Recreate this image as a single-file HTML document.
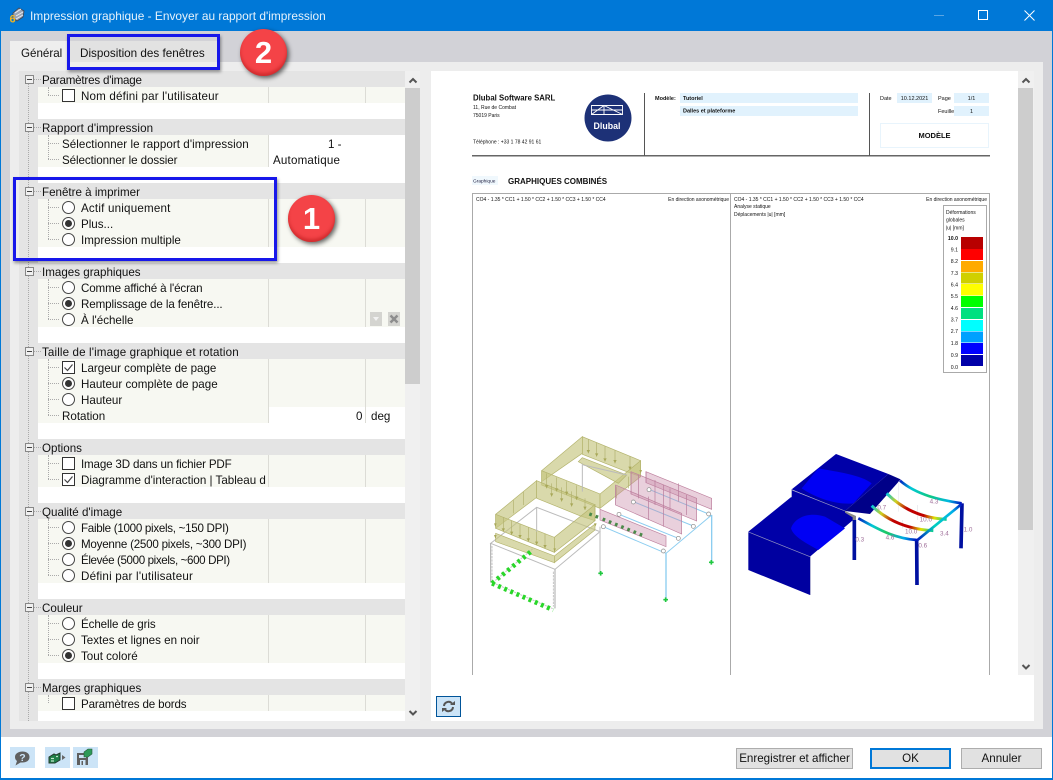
<!DOCTYPE html>
<html lang="fr"><head><meta charset="utf-8"><title>Impression graphique</title>
<style>
*{box-sizing:border-box}
html,body{margin:0;padding:0}
body{width:1053px;height:780px;overflow:hidden;position:relative;background:#fff;font:11.6px/16px "Liberation Sans",sans-serif;color:#111}
div,span.a{position:absolute}
.t{position:absolute;white-space:nowrap;line-height:16px;height:16px;margin-top:1px}
.h{left:19px;width:386px;height:16px;background:#e4e4e4}
.r{left:38px;width:367px;background:#f7f8f2}
.w{left:268px;width:137px;background:#fff}
.s{width:1px;background:#dcdcd6}
.v{width:0;border-left:1px dotted #aaa}
.m{left:25px;width:9px;height:9px;border:1px solid #888;background:#f0f0f0}
.m:after{content:"";position:absolute;left:1px;top:3px;width:5px;height:1px;background:#444}
.c{left:62px;width:13px;height:13px;border:1px solid #333;background:#fff}
.ra{left:62px;width:13px;height:13px;border:1px solid #444;border-radius:50%;background:#fff}
.on:after{content:"";position:absolute;left:2px;top:2px;width:7px;height:7px;border-radius:50%;background:#333}
.b{top:748px;height:21px;background:#e1e1e1;border:1px solid #adadad;text-align:center;line-height:20px;color:#111}
.ib{top:747px;height:21px;width:25px;background:#cce4f7}
.n{border-radius:50%;width:47px;height:47px;background:#f44347;box-shadow:2px 2px 5px rgba(0,0,0,.6),inset 0 -3px 3px rgba(150,0,0,.35);color:#fff;font-weight:bold;font-size:31px;line-height:47px;text-align:center}
.bx{border:3px solid #1717ea;box-shadow:1px 2px 3px rgba(0,0,0,.4)}
</style></head><body>

<!-- window -->
<div style="left:0;top:0;width:1053px;height:31px;background:#0078d7"></div>
<div style="left:1px;top:31px;width:1051px;height:706px;background:#d2d2d7"></div>
<div style="left:0;top:31px;width:1px;height:749px;background:#0078d7"></div>
<div style="left:1052px;top:31px;width:1px;height:749px;background:#0078d7"></div>
<div style="left:0;top:778px;width:1053px;height:2px;background:#0078d7"></div>

<svg style="position:absolute;left:8px;top:7px" width="18" height="18" viewBox="0 0 18 18">
<path d="M5 6 L11 1 L16 4 L15 10 L9 14 L5 11Z" fill="#9aa4b4" stroke="#3d4350" stroke-width=".8"/>
<path d="M7 6 L13 2 M8 9 L15 5 M8 12 L15 8" stroke="#e8ecf2" stroke-width="1"/>
<text x="1.500" y="15.500" font-family="Liberation Sans" font-size="11" font-weight="bold" fill="#f3b51d">6</text>
</svg>
<span class="t" style="left:30px;top:7px;color:#e6f2fb;font-size:11.9px">Impression graphique - Envoyer au rapport d'impression</span>
<div style="left:934px;top:15px;width:10px;height:1px;background:#5aa5e3"></div>
<div style="left:978px;top:10px;width:10px;height:10px;border:1px solid #fff"></div>
<svg style="position:absolute;left:1024px;top:10px" width="11" height="11"><path d="M.5 .5L10.5 10.5M10.5 .5L.5 10.5" stroke="#fff" stroke-width="1"/></svg>

<!-- tabs + panel -->
<div style="left:10px;top:41px;width:57px;height:22px;background:#eee"></div>
<div style="left:68px;top:41px;width:150px;height:21px;background:#e2e2e2"></div>
<div style="left:10px;top:62px;width:1033px;height:667px;background:#ededed"></div>
<span class="t" style="left:21px;top:45px">Général</span>
<span class="t" style="left:80px;top:45px;font-size:11.7px">Disposition des fenêtres</span>

<!-- tree -->
<div style="left:19px;top:71px;width:386px;height:650px;background:#fff"></div>
<div style="left:19px;top:71px;width:19px;height:650px;background:#e4e4e4"></div>

<div class="h" style="top:71px"></div><div class="r" style="top:87px;height:16px"></div>
<div class="h" style="top:119px"></div><div class="r" style="top:135px;height:32px"></div><div class="w" style="top:135px;height:32px"></div>
<div class="h" style="top:183px"></div><div class="r" style="top:199px;height:48px"></div>
<div class="h" style="top:263px"></div><div class="r" style="top:279px;height:48px"></div>
<div class="h" style="top:343px"></div><div class="r" style="top:359px;height:64px"></div><div class="w" style="top:407px;height:16px"></div>
<div class="h" style="top:439px"></div><div class="r" style="top:455px;height:32px"></div>
<div class="h" style="top:503px"></div><div class="r" style="top:519px;height:64px"></div>
<div class="h" style="top:599px"></div><div class="r" style="top:615px;height:48px"></div>
<div class="h" style="top:679px"></div><div class="r" style="top:695px;height:16px"></div>

<!-- separators -->
<div class="s" style="left:268px;top:87px;height:16px"></div><div class="s" style="left:365px;top:87px;height:16px"></div>
<div class="s" style="left:268px;top:135px;height:32px"></div>
<div class="s" style="left:268px;top:199px;height:48px"></div><div class="s" style="left:365px;top:199px;height:48px"></div>
<div class="s" style="left:268px;top:279px;height:48px"></div><div class="s" style="left:365px;top:279px;height:48px"></div>
<div class="s" style="left:268px;top:359px;height:64px"></div><div class="s" style="left:365px;top:359px;height:64px"></div>
<div class="s" style="left:268px;top:455px;height:32px"></div><div class="s" style="left:365px;top:455px;height:32px"></div>
<div class="s" style="left:268px;top:519px;height:64px"></div><div class="s" style="left:365px;top:519px;height:64px"></div>
<div class="s" style="left:268px;top:615px;height:48px"></div><div class="s" style="left:365px;top:615px;height:48px"></div>
<div class="s" style="left:268px;top:695px;height:16px"></div><div class="s" style="left:365px;top:695px;height:16px"></div>

<!-- tree lines -->
<div class="v" style="left:28px;top:84px;height:637px"></div>
<div class="v" style="left:48px;top:87px;height:8px"></div>
<div class="v" style="left:48px;top:135px;height:24px"></div>
<div class="v" style="left:48px;top:199px;height:40px"></div>
<div class="v" style="left:48px;top:279px;height:40px"></div>
<div class="v" style="left:48px;top:359px;height:56px"></div>
<div class="v" style="left:48px;top:455px;height:24px"></div>
<div class="v" style="left:48px;top:519px;height:56px"></div>
<div class="v" style="left:48px;top:615px;height:40px"></div>
<div class="v" style="left:48px;top:695px;height:8px"></div>
<svg style="position:absolute;left:0;top:0" width="70" height="720">
<path stroke="#aaa" stroke-dasharray="1 1" fill="none" d="M34 79.500H41M34 127.500H41M34 191.500H41M34 271.500H41M34 351.500H41M34 447.500H41M34 511.500H41M34 607.500H41M34 687.500H41
M48 95.500H60M48 143.500H60M48 159.500H60M48 207.500H60M48 223.500H60M48 239.500H60M48 287.500H60M48 303.500H60M48 319.500H60M48 367.500H60M48 383.500H60M48 399.500H60M48 415.500H60M48 463.500H60M48 479.500H60M48 527.500H60M48 543.500H60M48 559.500H60M48 575.500H60M48 623.500H60M48 639.500H60M48 655.500H60"/>
</svg>
<div class="m" style="top:75px"></div><div class="m" style="top:123px"></div><div class="m" style="top:187px"></div><div class="m" style="top:267px"></div><div class="m" style="top:347px"></div><div class="m" style="top:443px"></div><div class="m" style="top:507px"></div><div class="m" style="top:603px"></div><div class="m" style="top:683px"></div>

<!-- tree labels -->
<span class="t" style="left:42px;top:72px;letter-spacing:-.2px">Paramètres d'image</span>
<div class="c" style="top:89px"></div><span class="t" style="left:81px;top:88px;letter-spacing:.17px">Nom défini par l'utilisateur</span>
<span class="t" style="left:42px;top:120px;letter-spacing:.1px">Rapport d'impression</span>
<span class="t" style="left:62px;top:136px;letter-spacing:.06px">Sélectionner le rapport d'impression</span>
<span class="t" style="left:328px;top:136px">1 -</span>
<span class="t" style="left:62px;top:152px;letter-spacing:-.08px">Sélectionner le dossier</span>
<span class="t" style="left:273px;top:152px;letter-spacing:.18px">Automatique</span>
<span class="t" style="left:42px;top:184px">Fenêtre à imprimer</span>
<div class="ra" style="top:201px"></div><span class="t" style="left:81px;top:200px;letter-spacing:.2px">Actif uniquement</span>
<div class="ra on" style="top:217px"></div><span class="t" style="left:81px;top:216px">Plus...</span>
<div class="ra" style="top:233px"></div><span class="t" style="left:81px;top:232px">Impression multiple</span>
<span class="t" style="left:42px;top:264px">Images graphiques</span>
<div class="ra" style="top:281px"></div><span class="t" style="left:81px;top:280px;letter-spacing:-.13px">Comme affiché à l'écran</span>
<div class="ra on" style="top:297px"></div><span class="t" style="left:81px;top:296px;letter-spacing:-.1px">Remplissage de la fenêtre...</span>
<div class="ra" style="top:313px"></div><span class="t" style="left:81px;top:312px">À l'échelle</span>
<div style="left:370px;top:312px;width:12px;height:14px;background:#d4d4d0"></div>
<div style="left:388px;top:312px;width:12px;height:14px;background:#d4d4d0"></div>
<svg style="position:absolute;left:370px;top:312px" width="30" height="14"><path d="M3 5H9L6 9Z" fill="#f2f2f2"/><path d="M20.500 3.500L27.500 10.500M27.500 3.500L20.500 10.500" stroke="#8d8d8d" stroke-width="2.500"/></svg>
<span class="t" style="left:42px;top:344px;letter-spacing:.13px">Taille de l'image graphique et rotation</span>
<div class="c" style="top:361px"></div><span class="t" style="left:81px;top:360px">Largeur complète de page</span>
<div class="ra on" style="top:377px"></div><span class="t" style="left:81px;top:376px">Hauteur complète de page</span>
<div class="ra" style="top:393px"></div><span class="t" style="left:81px;top:392px">Hauteur</span>
<span class="t" style="left:62px;top:408px">Rotation</span>
<span class="t" style="left:356px;top:408px">0</span><span class="t" style="left:371px;top:408px">deg</span>
<span class="t" style="left:42px;top:440px">Options</span>
<div class="c" style="top:457px"></div><span class="t" style="left:81px;top:456px;letter-spacing:-.17px">Image 3D dans un fichier PDF</span>
<div class="c" style="top:473px"></div><span class="t" style="left:81px;top:472px;width:186px;overflow:hidden">Diagramme d'interaction | Tableau d</span>
<svg style="position:absolute;left:62px;top:361px" width="13" height="128"><path d="M2.500 6.500L5.500 9.500L10.500 3.500M2.500 118.500L5.500 121.500L10.500 115.500" stroke="#444" stroke-width="1.200" fill="none"/></svg>
<span class="t" style="left:42px;top:504px">Qualité d'image</span>
<div class="ra" style="top:521px"></div><span class="t" style="left:81px;top:520px;letter-spacing:-.29px">Faible (1000 pixels, ~150 DPI)</span>
<div class="ra on" style="top:537px"></div><span class="t" style="left:81px;top:536px;letter-spacing:-.23px">Moyenne (2500 pixels, ~300 DPI)</span>
<div class="ra" style="top:553px"></div><span class="t" style="left:81px;top:552px;letter-spacing:-.38px">Élevée (5000 pixels, ~600 DPI)</span>
<div class="ra" style="top:569px"></div><span class="t" style="left:81px;top:568px;letter-spacing:.2px">Défini par l'utilisateur</span>
<span class="t" style="left:42px;top:600px">Couleur</span>
<div class="ra" style="top:617px"></div><span class="t" style="left:81px;top:616px;letter-spacing:-.1px">Échelle de gris</span>
<div class="ra" style="top:633px"></div><span class="t" style="left:81px;top:632px">Textes et lignes en noir</span>
<div class="ra on" style="top:649px"></div><span class="t" style="left:81px;top:648px">Tout coloré</span>
<span class="t" style="left:42px;top:680px">Marges graphiques</span>
<div class="c" style="top:697px"></div><span class="t" style="left:81px;top:696px;letter-spacing:-.15px">Paramètres de bords</span>

<!-- tree scrollbar -->
<div style="left:405px;top:71px;width:15px;height:650px;background:#f0f0f0"></div>
<div style="left:405px;top:88px;width:15px;height:296px;background:#cdcdcd"></div>
<svg style="position:absolute;left:405px;top:71px" width="16" height="650"><path d="M4.500 11.500L8 8L11.500 11.500" stroke="#555" stroke-width="2" fill="none"/><path d="M4.500 640L8 643.500L11.500 640" stroke="#555" stroke-width="2" fill="none"/></svg>

<!-- preview -->
<div style="left:431px;top:71px;width:603px;height:650px;background:#fff"></div>
<div style="left:1018px;top:71px;width:16px;height:604px;background:#f0f0f0"></div>
<div style="left:1018px;top:88px;width:15px;height:442px;background:#cdcdcd"></div>
<svg style="position:absolute;left:1018px;top:71px" width="16" height="604"><path d="M4.500 11.500L8 8L11.500 11.500" stroke="#555" stroke-width="2" fill="none"/><path d="M4.500 594L8 597.500L11.500 594" stroke="#555" stroke-width="2" fill="none"/></svg>

<svg style="position:absolute;left:0;top:0" width="1053" height="780" font-family="Liberation Sans" fill="#111">
<defs>
<linearGradient id="g1" gradientUnits="userSpaceOnUse" x1="510" y1="120" x2="695" y2="190"><stop offset="0" stop-color="#0018c0"/><stop offset=".2" stop-color="#00c8d8"/><stop offset=".5" stop-color="#10c880"/><stop offset=".8" stop-color="#00b8e0"/><stop offset="1" stop-color="#0010c0"/></linearGradient>
<linearGradient id="g2" gradientUnits="userSpaceOnUse" x1="470" y1="160" x2="650" y2="238"><stop offset="0" stop-color="#00c8e0"/><stop offset=".18" stop-color="#d0d020"/><stop offset=".38" stop-color="#c00000"/><stop offset=".65" stop-color="#c00000"/><stop offset=".82" stop-color="#e0e000"/><stop offset="1" stop-color="#00c8a0"/></linearGradient>
<linearGradient id="g3" gradientUnits="userSpaceOnUse" x1="425" y1="197" x2="610" y2="272"><stop offset="0" stop-color="#00c8e0"/><stop offset=".18" stop-color="#d0d020"/><stop offset=".38" stop-color="#c00000"/><stop offset=".65" stop-color="#c00000"/><stop offset=".82" stop-color="#e0e000"/><stop offset="1" stop-color="#00c8a0"/></linearGradient>
<linearGradient id="g4" gradientUnits="userSpaceOnUse" x1="385" y1="235" x2="560" y2="300"><stop offset="0" stop-color="#0018c0"/><stop offset=".25" stop-color="#00c8d8"/><stop offset=".5" stop-color="#20c860"/><stop offset=".8" stop-color="#00a8e8"/><stop offset="1" stop-color="#0010c0"/></linearGradient>
<linearGradient id="g5" gradientUnits="userSpaceOnUse" x1="560" y1="300" x2="695" y2="192"><stop offset="0" stop-color="#0018c0"/><stop offset=".4" stop-color="#00d0c0"/><stop offset=".8" stop-color="#00b0e8"/><stop offset="1" stop-color="#0010c0"/></linearGradient>
</defs>

<!-- page header -->
<text x="473" y="100.500" font-size="7.800" font-weight="bold">Dlubal Software SARL</text>
<text x="473" y="109" font-size="5">11, Rue de Combat</text>
<text x="473" y="117" font-size="5">75019 Paris</text>
<text x="473" y="143.500" font-size="5">Téléphone : +33 1 78 42 91 61</text>
<circle cx="608" cy="118" r="23.500" fill="#1d3177"/>
<path d="M591.500 114.500V105.500H622.500V114.500ZM591.500 114.500L604 105.500M604 105.500V114.500M604 105.500L622.500 114.500M591.500 110H622.500" stroke="#fff" stroke-width=".9" fill="none"/>
<text x="607" y="129" font-size="8.800" font-weight="bold" fill="#fff" text-anchor="middle">Dlubal</text>
<rect x="472" y="155" width="518" height="1.500" fill="#666"/>
<rect x="644" y="93" width="1" height="63" fill="#555"/>
<rect x="869" y="93" width="1" height="63" fill="#555"/>
<text x="655" y="100" font-size="5.500" font-weight="bold">Modèle:</text>
<rect x="680" y="93" width="178" height="10" fill="#e1f2fd"/>
<rect x="680" y="106" width="178" height="10" fill="#e1f2fd"/>
<text x="683" y="100" font-size="5.500" font-weight="bold">Tutoriel</text>
<text x="683" y="112.500" font-size="5.500" font-weight="bold">Dalles et plateforme</text>
<text x="880" y="100" font-size="5.500">Date</text>
<rect x="897" y="93" width="35" height="10" fill="#e1f2fd"/>
<text x="914.500" y="100" font-size="5.500" text-anchor="middle">10.12.2021</text>
<text x="938" y="100" font-size="5.500">Page</text>
<rect x="954" y="93" width="35" height="10" fill="#e1f2fd"/>
<text x="971.500" y="100" font-size="5.500" text-anchor="middle">1/1</text>
<text x="938" y="113" font-size="5.500">Feuille</text>
<rect x="954" y="106" width="35" height="10" fill="#e1f2fd"/>
<text x="971.500" y="113" font-size="5.500" text-anchor="middle">1</text>
<rect x="880.500" y="123.500" width="108" height="24" fill="#fff" stroke="#e8f4fc"/>
<text x="934.500" y="138" font-size="7.500" font-weight="bold" text-anchor="middle">MODÈLE</text>
<rect x="472" y="176" width="26" height="9" fill="#f0f8fd"/>
<text x="473" y="182.500" font-size="4.800" fill="#224">Graphique</text>
<text x="508" y="184" font-size="8" font-weight="bold">GRAPHIQUES COMBINÉS</text>

<!-- frames -->
<path d="M472.500 675V193.500H989.500V675M730.500 193.500V675" fill="none" stroke="#aaa" stroke-width="1"/>
<text x="476" y="201" font-size="5">CO4 - 1.35 * CC1 + 1.50 * CC2 + 1.50 * CC3 + 1.50 * CC4</text>
<text x="729" y="201" font-size="5" text-anchor="end">En direction axonométrique</text>
<text x="734" y="201" font-size="5">CO4 - 1.35 * CC1 + 1.50 * CC2 + 1.50 * CC3 + 1.50 * CC4</text>
<text x="987" y="201" font-size="5" text-anchor="end">En direction axonométrique</text>
<text x="734" y="208" font-size="5">Analyse statique</text>
<text x="734" y="216" font-size="5">Déplacements |u| [mm]</text>

<!-- legend -->
<rect x="943.500" y="205.500" width="43" height="167" fill="#fff" stroke="#aaa"/>
<text x="946" y="214" font-size="5">Déformations</text>
<text x="946" y="221.500" font-size="5">globales</text>
<text x="946" y="229.500" font-size="5">|u| [mm]</text>
<g>
<rect x="961" y="237" width="22" height="12" fill="#b80000"/>
<rect x="961" y="249" width="22" height="11" fill="#ff0000"/>
<rect x="961" y="261" width="22" height="11" fill="#ffaa00"/>
<rect x="961" y="272.500" width="22" height="11" fill="#d0d000"/>
<rect x="961" y="284" width="22" height="11.500" fill="#ffff00"/>
<rect x="961" y="296" width="22" height="11" fill="#00ff00"/>
<rect x="961" y="308" width="22" height="11" fill="#00e080"/>
<rect x="961" y="320" width="22" height="11" fill="#00ffff"/>
<rect x="961" y="331.500" width="22" height="11" fill="#00a0ff"/>
<rect x="961" y="343" width="22" height="11" fill="#0000ff"/>
<rect x="961" y="355" width="22" height="11" fill="#0000a8"/>
</g>
<g font-size="5.200" text-anchor="end">
<text x="958" y="240" font-weight="bold">10.0</text><text x="958" y="251.500">9.1</text><text x="958" y="263">8.2</text><text x="958" y="275">7.3</text><text x="958" y="286.500">6.4</text><text x="958" y="298">5.5</text><text x="958" y="310">4.6</text><text x="958" y="321.500">3.7</text><text x="958" y="333">2.7</text><text x="958" y="345">1.8</text><text x="958" y="357">0.9</text><text x="958" y="369">0.0</text>
</g>

<!-- left model -->
<g transform="translate(470 420) scale(.33333)">
<path d="M62 370L255 448L390 335L200 262Z" fill="none" stroke="#bbb" stroke-width="3"/>
<path d="M66 378V480M250 455V560" stroke="#bbb" stroke-width="2.500" fill="none" stroke-dasharray="7 3"/>
<path d="M62 370V488M255 448V565" stroke="#aaa" stroke-width="3"/>
<path d="M68 488L248 566M68 488L190 385" stroke="#c8c8c8" stroke-width="3" stroke-dasharray="7 3"/>
<path d="M390 320V460" stroke="#ccc" stroke-width="4"/>
<path d="M400 320L588 400L725 285M447 283L625 355M490 245L670 318M537 208L716 282" stroke="#8ccdf0" stroke-width="3" fill="none"/>
<path d="M588 400V540M725 285V428" stroke="#8ccdf0" stroke-width="4"/>
<path d="M392 453V467M385 460H399M587 532V546M580 539H594M724 420V434M717 427H731" stroke="#20c840" stroke-width="5"/>
<!-- olive rings -->
<g fill="#c6c680" fill-opacity=".66" stroke="#b3b36c" stroke-width="2">
<path d="M337 50L215 152V185L337 100Z"/>
<path d="M337 50L512 122V170L470 155L337 103Z"/>
<path d="M215 152L390 222V265L215 195Z"/>
<path d="M512 122L390 222V265L512 170Z"/>
<path d="M337 113L470 165L445 190L325 125Z"/>
<path d="M200 182L77 283V325L200 232Z"/>
<path d="M200 182L375 254V302L332 288L200 235Z"/>
<path d="M77 283L253 352V397L77 325Z"/>
<path d="M375 254L253 352V397L375 302Z"/>
<path d="M77 340L253 408V428L77 365Z"/>
<path d="M253 408L375 312V330L253 428Z"/>
</g>
<path d="M100 292V335M125 302V345M150 312V355M175 322V365M200 332V375M225 342V385M230 160V205M260 172V215M290 184V225M320 196V240M355 58V100M380 68V110M405 78V125M435 90V130M480 108V150M245 190V230M275 202V245M305 214V260M345 235V270M130 240V280M160 215V255M440 200V235M475 170V205" stroke="#b0b06e" stroke-width="2"/>
<g fill="#a8a858">
<path d="M95 325h10l-5 10zM120 335h10l-5 10zM145 345h10l-5 10zM170 355h10l-5 10zM195 365h10l-5 10zM220 375h10l-5 10zM225 195h10l-5 10zM255 205h10l-5 10zM285 215h10l-5 10zM315 230h10l-5 10zM350 90h10l-5 10zM375 100h10l-5 10zM400 115h10l-5 10zM430 120h10l-5 10zM475 140h10l-5 10zM240 220h10l-5 10zM270 235h10l-5 10zM300 250h10l-5 10zM340 260h10l-5 10zM72 310h8l-4 10zM72 345h8l-4 10zM508 150h8l-4 10zM372 310h8l-4 10zM250 385h8l-4 10z"/>
</g>
<path d="M200 262V335M337 130V215M340 135L470 165" stroke="#bbb" stroke-width="3" fill="none"/>
<!-- pink panels -->
<g fill="#c98aa8" fill-opacity=".4" stroke="#bd7f9d" stroke-width="2">
<path d="M528 155L725 235V268L528 188Z"/>
<path d="M483 155L680 235V303L483 222Z"/>
<path d="M437 195L635 280V342L437 255Z"/>
<path d="M390 268L588 348V380L390 300Z"/>
</g>
<path d="M437 195V255M483 155V222M528 155V188M535 230V300M580 195V275M625 190V245M580 250V320M505 165V235M555 180V255M600 205V270M650 225V285" stroke="#b87a9a" stroke-width="2"/>
<g fill="#fff" stroke="#888" stroke-width="2">
<circle cx="580" cy="393" r="6"/><circle cx="625" cy="355" r="6"/><circle cx="670" cy="319" r="6"/><circle cx="716" cy="282" r="6"/>
<circle cx="537" cy="209" r="6"/><circle cx="490" cy="246" r="6"/><circle cx="447" cy="283" r="6"/><circle cx="400" cy="320" r="6"/>
</g>
<!-- green supports -->
<path d="M66 490L250 570M66 490L186 392" stroke="#2ad62a" stroke-width="14" stroke-dasharray="9 11" fill="none"/>
<path d="M398 297L525 349M358 282L385 292" stroke="#4a8a4a" stroke-width="10" stroke-dasharray="8 12" fill="none"/>
</g>

<!-- right model -->
<g transform="translate(730 440) scale(.33333)">
<path d="M318 42L475 102L345 213L185 148Z" fill="#0000a8"/>
<path d="M185 150L345 213L375 235L240 350L55 275L185 170Z" fill="#0000a8"/>
<path d="M55 275L240 350V465L55 390Z" fill="#0000a0"/>
<path d="M265 85C320 95 395 105 425 130L370 190C320 195 260 175 215 145Z" fill="#0000f4"/>
<path d="M183 265C195 230 240 215 285 230L345 265L265 330C230 310 190 290 183 265Z" fill="#0000f4"/>
<path d="M475 102L512 118L420 222L345 213Z" fill="#000088"/>
<path d="M185 150L345 213M55 276L240 350M242 350V465" stroke="#8f90c0" stroke-width="2" fill="none"/>
<path d="M185 148V172" stroke="#8888c8" stroke-width="2"/>
<path d="M345 213L378 228V246H368V232L345 218Z" fill="#888"/>
<path d="M563 195V240M518 240V265" stroke="#e4e4e8" stroke-width="2"/>
<path d="M505 125V215" stroke="#e8e8f0" stroke-width="2"/>
<path d="M373 240V360M560 300L561 435M696 190L693 325" stroke="#0010a0" stroke-width="11" fill="none"/>
<path d="M510 122C560 165 630 180 695 190" stroke="url(#g1)" stroke-width="8" fill="none"/>
<path d="M470 160C520 210 580 235 650 238" stroke="url(#g2)" stroke-width="9" fill="none"/>
<path d="M425 197C470 240 530 268 610 272" stroke="url(#g3)" stroke-width="9" fill="none"/>
<path d="M385 235C440 265 490 295 560 300" stroke="url(#g4)" stroke-width="8" fill="none"/>
<path d="M560 302L695 192" stroke="url(#g5)" stroke-width="8" fill="none"/>
<g font-size="19" fill="#a0709a">
<text x="442" y="209">0.7</text><text x="599" y="191">4.3</text><text x="569" y="245">10.0</text><text x="525" y="281">10.0</text><text x="630" y="287">3.4</text><text x="467" y="299">4.6</text><text x="376" y="305">0.3</text><text x="565" y="323">0.6</text><text x="701" y="274">1.0</text>
</g>
</g>
</svg>

<!-- refresh button -->
<div style="left:436px;top:696px;width:25px;height:21px;background:#cce4f7;border:1px solid #005499"></div>
<svg style="position:absolute;left:436px;top:696px" width="25" height="21"><path d="M8 10A4.500 4.500 0 0 1 16 7.500M17 11A4.500 4.500 0 0 1 9 13.500" stroke="#555" stroke-width="2" fill="none"/><path d="M14 9H19V5ZM11 12H6V16Z" fill="#555"/></svg>

<!-- footer -->
<div class="ib" style="left:10px"></div><div class="ib" style="left:45px"></div><div class="ib" style="left:73px"></div>
<svg style="position:absolute;left:10px;top:747px" width="90" height="21">
<path d="M12.500 4.500C16.500 4.500 19.500 6.500 19.500 10C19.500 13.500 16.500 15.500 12.500 15.500H10.500L5.500 18.500L7 14C5.500 13 5 11.500 5 10C5 6.500 8.500 4.500 12.500 4.500Z" fill="#5f5f5f"/>
<text x="12.500" y="14" font-family="Liberation Sans" font-size="10.500" font-weight="bold" fill="#cce4f7" text-anchor="middle">?</text>
<path d="M39 10L44 7L46 8L50 6V13L45 16H39Z" fill="#1f7f48" stroke="#243a2c" stroke-width="1"/>
<path d="M41 11.500H44M41 14H44M46 9.500H48" stroke="#bfe6cc" stroke-width="1.200"/>
<path d="M52 8L55.500 10.500L52 13Z" fill="#666"/>
<path d="M67 6H78V18H67Z" fill="#5f5f5f"/>
<rect x="69" y="8" width="7" height="3" fill="#cce4f7"/><rect x="70" y="13" width="5.500" height="5" fill="#cce4f7"/><rect x="71.500" y="14" width="1.500" height="4" fill="#5f5f5f"/>
<path d="M74 5L78 2H82V7L78 10H74Z" fill="#2e9a58" stroke="#2a5a3a" stroke-width=".6"/>
</svg>
<div class="b" style="left:736px;width:117px">Enregistrer et afficher</div>
<div class="b" style="left:870px;width:81px;border:2px solid #0078d7;line-height:18px">OK</div>
<div class="b" style="left:961px;width:81px">Annuler</div>

<!-- annotations -->
<div class="bx" style="left:67px;top:34px;width:153px;height:36px"></div>
<div class="bx" style="left:13px;top:177px;width:264px;height:84px"></div>
<div class="n" style="left:240px;top:29px">2</div>
<div class="n" style="left:288px;top:195px">1</div>
</body></html>
